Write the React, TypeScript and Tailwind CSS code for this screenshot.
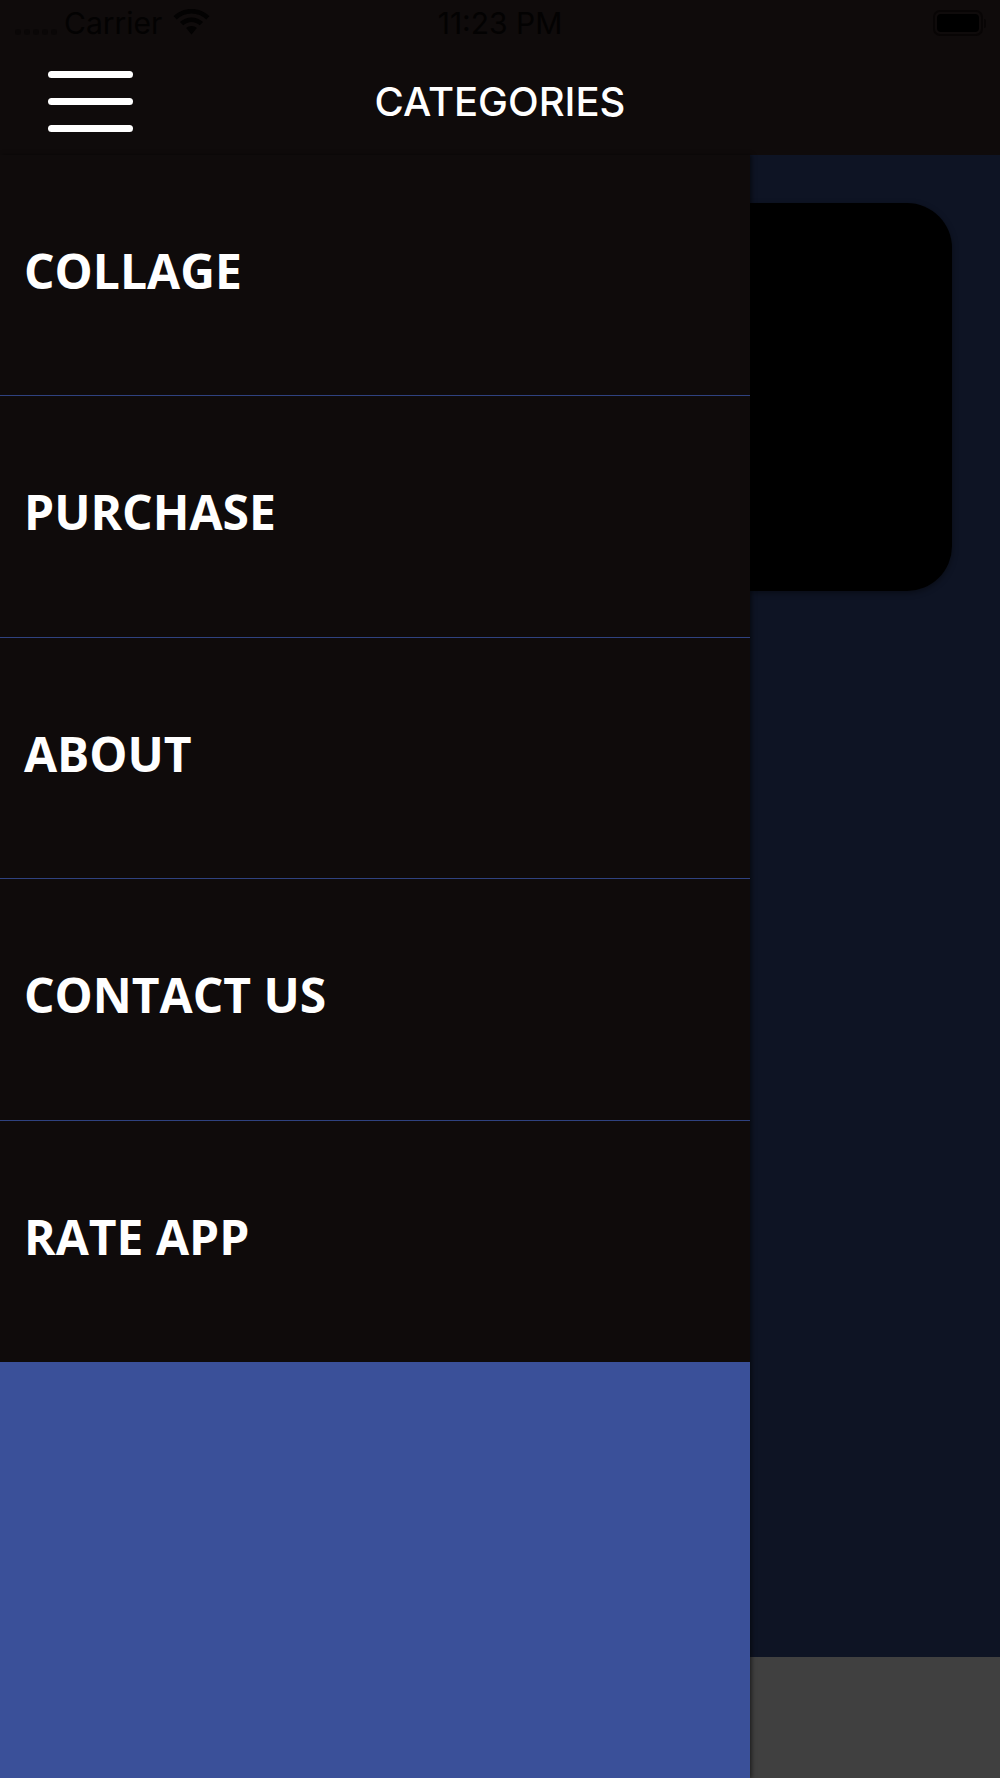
import React from 'react';

const menuItems = ['COLLAGE', 'PURCHASE', 'ABOUT', 'CONTACT US', 'RATE APP'];

function WifiIcon() {
  return (
    <svg width="37" height="26" viewBox="0 0 38 27" fill="#030202">
      <path d="M19 0C11.6 0 5.2 2.8 0.4 7.4L3.7 10.8C7.7 7 13 4.7 19 4.7S30.3 7 34.3 10.8L37.6 7.4C32.8 2.8 26.4 0 19 0Z" />
      <path d="M19 8.8C14.3 8.8 10.2 10.6 7 13.6L10.4 17C12.7 14.9 15.7 13.6 19 13.6S25.3 14.9 27.6 17L31 13.6C27.8 10.6 23.7 8.8 19 8.8Z" />
      <path d="M19 17.6C16.8 17.6 14.9 18.4 13.5 19.8L19 26.5L24.5 19.8C23.1 18.4 21.2 17.6 19 17.6Z" />
    </svg>
  );
}

export default function App() {
  return (
    <div className="w-[1000px] h-[1778px] flex flex-col overflow-hidden bg-[#0f0b0b] font-['Inter',sans-serif]">
      {/* Status bar + title bar */}
      <header className="h-[155px] shrink-0 bg-[#0f0b0b]">
        <div className="h-[46px] grid grid-cols-3 items-center text-[#030202] text-[30px] leading-none">
          <div className="flex items-center pl-[15px]">
            <div className="flex gap-[3px] mt-[18px]">
              {[0, 1, 2, 3, 4].map((dot) => (
                <span key={dot} className="w-[6px] h-[6px] rounded-full bg-[#0a0707]" />
              ))}
            </div>
            <span className="ml-[7px]">Carrier</span>
            <span className="ml-[11px] -mt-[2px]">
              <WifiIcon />
            </span>
          </div>
          <div className="text-center">11:23 PM</div>
          <div className="flex justify-end items-center pr-[14px]">
            <div className="w-[50px] h-[26px] rounded-[7px] border-2 border-[#080505] p-[2px]">
              <div className="w-full h-full rounded-[4px] bg-black" />
            </div>
            <span className="w-[2px] h-[9px] ml-[1px] rounded-r-full bg-[#080505]" />
          </div>
        </div>
        <div className="h-[109px] grid grid-cols-3 items-center">
          <div className="pl-[48px] flex flex-col gap-[20px] pt-[2px]">
            <span className="w-[85px] h-[7px] rounded-full bg-white" />
            <span className="w-[85px] h-[7px] rounded-full bg-white" />
            <span className="w-[85px] h-[7px] rounded-full bg-white" />
          </div>
          <h1 className="pt-[2px] flex justify-center text-white text-[40px] font-[550] leading-none whitespace-nowrap">
            CATEGORIES
          </h1>
        </div>
      </header>

      <div className="flex-1 flex min-h-0">
        {/* Drawer */}
        <nav className="w-[750px] shrink-0 flex flex-col bg-[#3a5099] shadow-[2px_0_4px_rgba(0,0,0,0.5)] z-10 font-['Open_Sans',sans-serif]">
          <ul className="flex flex-col bg-[#0f0b0b]">
            {menuItems.map((item, idx) => (
              <li
                key={item}
                className={`h-[241.4px] pl-[24px] pt-[80px] text-white text-[48px] font-bold leading-[72px] ${
                  idx < menuItems.length - 1 ? 'border-b border-[#2f4280]' : ''
                }`}
              >
                {item}
              </li>
            ))}
          </ul>
        </nav>

        {/* Page behind the drawer */}
        <main className="flex-1 flex flex-col bg-[#0e1424]">
          <div className="flex-1 pt-[48px] pr-[48px]">
            <div className="h-[388px] rounded-r-[45px] bg-black shadow-[0_2px_6px_rgba(0,0,0,0.4)]" />
          </div>
          <div className="h-[121px] shrink-0 bg-[#404040]" />
        </main>
      </div>
    </div>
  );
}
